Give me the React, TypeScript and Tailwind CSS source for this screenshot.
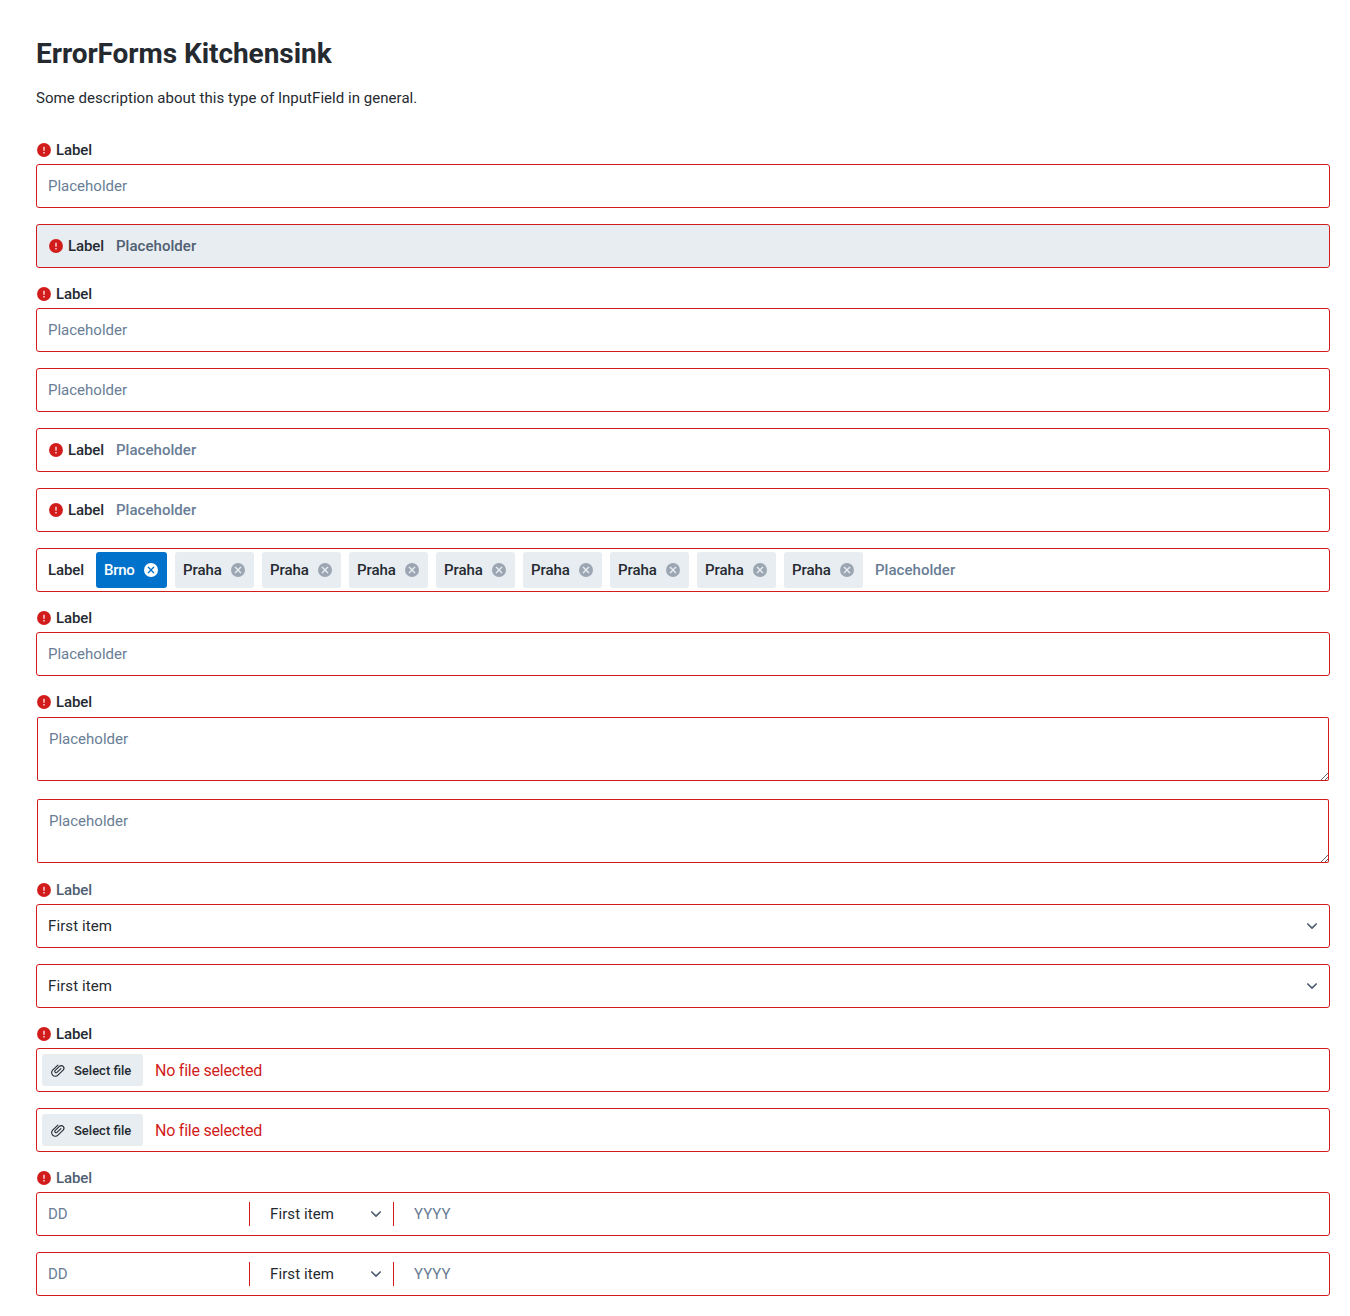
import type { ReactNode } from "react";

function AlertIcon() {
  return (
    <svg viewBox="0 0 24 24" className="h-4 w-4 shrink-0">
      <circle cx="12" cy="12" r="10.4" fill="#D21C1C" />
      <path d="M12 7v6.2M12 15v2.2" stroke="#fff" strokeOpacity="0.9" strokeWidth="2" />
    </svg>
  );
}

function CloseCircle({ active }: { active?: boolean }) {
  return (
    <svg viewBox="0 0 24 24" className={active ? "h-4 w-4 shrink-0 text-white" : "h-4 w-4 shrink-0 text-[#9CA6B3]"}>
      <circle cx="12" cy="12" r="10.5" fill="currentColor" />
      <path d="M8 8l8 8M16 8l-8 8" stroke={active ? "#0172CB" : "#E8EDF1"} strokeWidth="2" strokeLinecap="round" />
    </svg>
  );
}

function Chevron() {
  return (
    <svg viewBox="0 0 24 24" className="h-4 w-4 shrink-0" fill="none" stroke="#4F5E71" strokeWidth="2.5" strokeLinecap="round" strokeLinejoin="round">
      <path d="M5.7 9l6.3 6.3L18.3 9" />
    </svg>
  );
}

function Clip() {
  return (
    <svg viewBox="0 0 24 24" className="h-4 w-4 shrink-0" fill="none" stroke="#252A31" strokeWidth="1.7" strokeLinecap="round" strokeLinejoin="round">
      <path d="M16.4 10l-6 5.6a2 2 0 0 1-2.9-2.7l7-6.6a4 4 0 0 1 5.6 5.6l-8.2 7.7a5.4 5.4 0 0 1-8-7.3l8-7.6" />
    </svg>
  );
}

function Label({ children = "Label", muted }: { children?: ReactNode; muted?: boolean }) {
  return (
    <div className="mb-1 flex h-5 items-center gap-1">
      <AlertIcon />
      <span className={muted ? "font-medium tracking-[-0.12px] text-[#4F5E71]" : "font-medium tracking-[-0.12px]"}>{children}</span>
    </div>
  );
}

function Box({ children, disabled }: { children: ReactNode; disabled?: boolean }) {
  return (
    <div
      className={
        disabled
          ? "flex h-11 items-center rounded-[3px] border border-[#D21C1C] bg-[#E8EDF1]"
          : "flex h-11 items-center rounded-[3px] border border-[#D21C1C] bg-white"
      }
    >
      {children}
    </div>
  );
}

function TextInput() {
  return (
    <Box>
      <input placeholder="Placeholder" className="h-full w-full bg-transparent px-[11px] outline-none placeholder:text-[#697D95]" />
    </Box>
  );
}

function InlineInput({ disabled }: { disabled?: boolean }) {
  return (
    <Box disabled={disabled}>
      <div className="flex items-center gap-1 pl-[11px] font-medium">
        <AlertIcon />
        <span className="w-9 tracking-[-0.12px]">Label</span>
      </div>
      <input
        placeholder="Placeholder"
        disabled={disabled}
        className={
          disabled
            ? "h-full min-w-0 flex-1 bg-transparent px-3 font-medium tracking-[0.04px] outline-none placeholder:text-[#4F5E71]"
            : "h-full min-w-0 flex-1 bg-transparent px-3 font-medium tracking-[0.04px] outline-none placeholder:text-[#697D95]"
        }
      />
    </Box>
  );
}

function Tag({ name, active }: { name: string; active?: boolean }) {
  return (
    <div
      className={
        active
          ? "flex h-9 w-[71px] items-center justify-between rounded-[3px] bg-[#0172CB] px-2 font-medium tracking-[-0.3px] text-white"
          : "flex h-9 w-[79px] items-center justify-between rounded-[3px] bg-[#E8EDF1] px-2 font-medium tracking-[-0.04px]"
      }
    >
      <span>{name}</span>
      <CloseCircle active={active} />
    </div>
  );
}

function TextArea() {
  return (
    <textarea
      placeholder="Placeholder"
      className="m-px block h-16 w-[calc(100%-2px)] resize-y rounded-[2px] bg-white p-3 leading-5 inset-ring inset-ring-[#D21C1C] outline-none placeholder:text-[#697D95]"
    />
  );
}

function SelectBox() {
  return (
    <Box>
      <span className="flex-1 pl-[11px] tracking-[0.1px]">First item</span>
      <span className="mr-[9px]">
        <Chevron />
      </span>
    </Box>
  );
}

function FileInput() {
  return (
    <Box>
      <button type="button" className="ml-[5px] flex h-8 w-[101px] items-center gap-2 rounded-[3px] bg-[#E8EDF1] pl-2 text-[13px] font-medium">
        <Clip />
        <span className="pt-0.5 whitespace-nowrap">Select file</span>
      </button>
      <span className="ml-3 pt-0.5 text-base tracking-[-0.22px] text-[#D21C1C]">No file selected</span>
    </Box>
  );
}

function DateInput() {
  return (
    <Box>
      <input placeholder="DD" className="w-[212px] bg-transparent px-[11px] outline-none placeholder:text-[#697D95]" />
      <div className="flex h-6 w-[145px] items-center justify-between border-x border-[#D21C1C] pr-[9px] pl-5">
        <span className="tracking-[0.1px]">First item</span>
        <Chevron />
      </div>
      <input placeholder="YYYY" className="min-w-0 flex-1 bg-transparent px-5 outline-none placeholder:text-[#697D95]" />
    </Box>
  );
}

const places = ["Praha", "Praha", "Praha", "Praha", "Praha", "Praha", "Praha", "Praha"];

export default function App() {
  return (
    <main className="min-h-[1316px] bg-white pt-[38px] pr-5 pb-5 pl-9 font-['Roboto',sans-serif] text-[15px] leading-5 text-[#252A31]">
      <h1 className="text-[28px] leading-8 font-bold tracking-[-0.06px]">ErrorForms Kitchensink</h1>
      <p className="mt-[18px] tracking-[0.04px]">Some description about this type of InputField in general.</p>
      <form className="mt-8 flex flex-col gap-4">
        <div>
          <Label />
          <TextInput />
        </div>
        <InlineInput disabled />
        <div>
          <Label />
          <TextInput />
        </div>
        <TextInput />
        <InlineInput />
        <InlineInput />
        <Box>
          <span className="mr-3 ml-[11px] w-9 font-medium tracking-[-0.12px]">Label</span>
          <div className="flex gap-2">
            <Tag name="Brno" active />
            {places.map((place, i) => (
              <Tag key={i} name={place} />
            ))}
          </div>
          <input placeholder="Placeholder" className="min-w-0 flex-1 bg-transparent px-3 font-medium tracking-[0.04px] outline-none placeholder:text-[#697D95]" />
        </Box>
        <div>
          <Label />
          <TextInput />
        </div>
        <div className="flow-root">
          <Label />
          <div className="flow-root">
            <TextArea />
          </div>
        </div>
        <div className="flow-root">
          <TextArea />
        </div>
        <div>
          <Label muted />
          <SelectBox />
        </div>
        <SelectBox />
        <div>
          <Label />
          <FileInput />
        </div>
        <FileInput />
        <div>
          <Label muted />
          <DateInput />
        </div>
        <DateInput />
      </form>
    </main>
  );
}
